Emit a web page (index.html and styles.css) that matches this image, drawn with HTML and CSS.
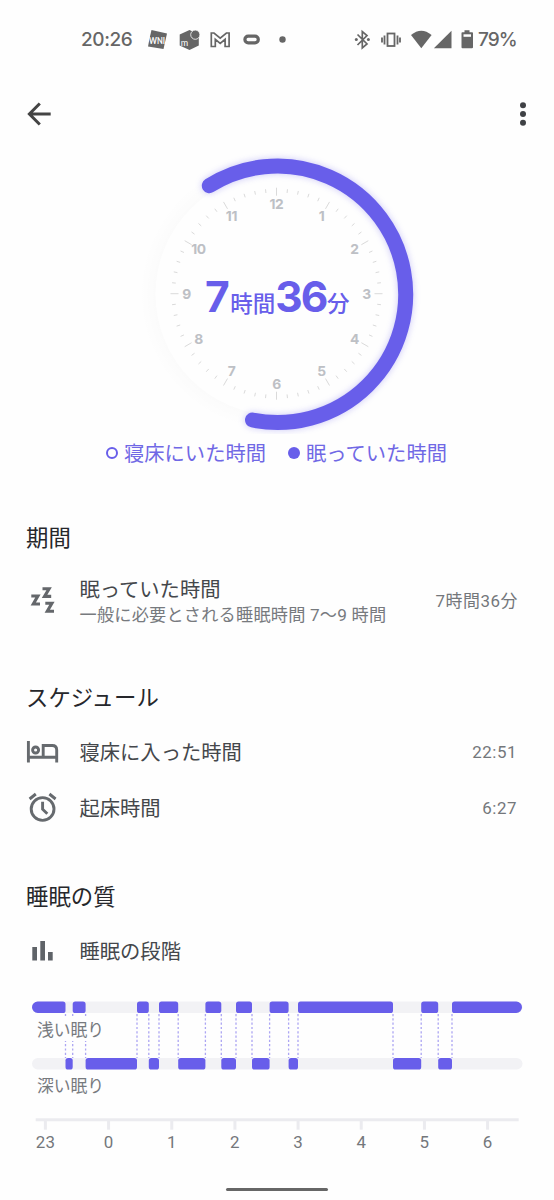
FILE: index.html
```html
<!DOCTYPE html>
<html lang="ja">
<head>
<meta charset="utf-8">
<title>睡眠</title>
<link rel="stylesheet" href="styles.css">
</head>
<body>
<div class="screen">
  <header class="status">
    <span class="status-time">20:26</span>
    <svg class="status-left" width="145" height="24" viewBox="145 27 145 24">
      <path class="glyph" d="M151.500 29l15.500 3.500-3.500 15.500-15.500-2.500 1.500-8z"/>
      <text class="tiny-mark" x="149" y="42.500" textLength="16" lengthAdjust="spacingAndGlyphs">WNI</text>
      <path class="glyph" d="M179.700 33.500l9.800-4.500 9.300 4.500v11l-9.300 4.500-9.800-4.500z"/>
      <circle class="glyph knob" cx="195.300" cy="33.700" r="4.600"/>
      <text class="tiny-mark thin" x="180.700" y="44.500">m</text>
      <path class="line" d="M211.300 45.500v-13.500h2.700l6.200 5.200 6.200-5.200h2.700v13.500h-4v-7.200l-4.900 4-4.900-4v7.200z"/>
      <rect class="line thick" x="244.900" y="35.200" width="13.400" height="6.600" rx="3.300"/>
      <circle class="glyph" cx="282.500" cy="38.500" r="3.200"/>
    </svg>
    <svg class="status-right" width="124" height="24" viewBox="352 27 124 24">
      <path class="line bt" d="M357.500 33.500l9.500 9.500-4.700 4v-16.500l4.700 4-9.500 9.500"/>
      <circle class="glyph" cx="356.300" cy="38.600" r="1.500"/><circle class="glyph" cx="368.400" cy="38.600" r="1.500"/>
      <rect class="line thick2" x="387.500" y="32.500" width="7" height="12.500"/>
      <path class="line thick2" d="M384.500 34.500v9M397.500 34.500v9M382 36.500v5M400 36.500v5"/>
      <path class="glyph" d="M411 34q10.300-8.500 20.600 0l-10.300 13.300z"/>
      <path class="glyph" d="M451.500 29.700v17.600h-17.600z"/>
      <path class="glyph" d="M464.500 29.300h5v2h2.700q.8 0 .8.800v14.200q0 1-1 1h-9.500q-1 0-1-1v-14.200q0-.8.800-.8h2.200z"/>
      <path class="gap" d="M463.500 33.300h7.500v2.500h-7.500z"/>
    </svg>
    <span class="status-battery">79%</span>
  </header>

  <nav class="appbar">
    <svg width="24" height="24" viewBox="0 0 24 24"><path class="arrow" d="M23.700 12H3M12.800 1.500L2.400 12l10.400 10.500"/></svg>
    <svg width="8" height="24" viewBox="0 0 8 24"><g class="dots"><circle cx="4" cy="3.200" r="3"/><circle cx="4" cy="12" r="3"/><circle cx="4" cy="20.800" r="3"/></g></svg>
  </nav>

  <svg class="dial" width="554" height="285" viewBox="0 149 554 285">
    <defs>
      <radialGradient id="halo" gradientUnits="userSpaceOnUse" cx="276.500" cy="294" r="137">
        <stop offset=".883" stop-color="#000" stop-opacity=".012"/>
        <stop offset="1" stop-color="#000" stop-opacity="0"/>
      </radialGradient>
      <filter id="glow" x="-20%" y="-20%" width="140%" height="140%"><feGaussianBlur stdDeviation="3.500"/></filter>
    </defs>
    <circle cx="276.500" cy="294" r="137" fill="url(#halo)"/>
    <circle class="face" cx="276.500" cy="294" r="121"/>
    <path class="arc arc-glow" filter="url(#glow)" d="M209.300 185.700A128.200 128.200 0 1 1 252.500 420"/>
    <path class="arc" d="M209.300 185.700A128.200 128.200 0 1 1 252.500 420"/>
    <g id="ticks"></g>
    <g id="hours" class="hours"></g>
    <text class="total" y="311.500"><tspan class="num" x="205">7</tspan><tspan class="unit" x="230.300">時間</tspan><tspan class="num" x="275.300">36</tspan><tspan class="unit" x="327">分</tspan></text>
  </svg>

  <div class="legend">
    <span class="legend-item"><i class="mark hollow"></i><span>寝床にいた時間</span></span>
    <span class="legend-item"><i class="mark"></i><span>眠っていた時間</span></span>
  </div>

  <section class="section duration">
    <h2>期間</h2>
    <div class="row tall">
      <svg class="icon" width="34" height="34" viewBox="26 583 34 34">
        <path class="zz" d="M31.300 596h6.600l-4.600 8h6.700M42.500 588.700h6.600l-4.600 7.700h6.700M45.300 603.300h6.600l-4.600 7.900h6.700"/>
      </svg>
      <div class="label"><div>眠っていた時間</div><div class="sub">一般に必要とされる睡眠時間 7〜9 時間</div></div>
      <span class="value">7時間36分</span>
    </div>
  </section>

  <section class="section schedule">
    <h2>スケジュール</h2>
    <div class="row">
      <svg class="icon" width="34" height="34" viewBox="26 735 34 34">
        <path class="stroke" d="M28.400 741v21.600M28.400 757.300h28.300M56.700 762.600v-12.600q0-4.500-4.500-4.500h-9v11.800"/>
        <circle class="stroke" cx="35.600" cy="750" r="3"/>
      </svg>
      <div class="label">寝床に入った時間</div>
      <span class="value">22:51</span>
    </div>
    <div class="row">
      <svg class="icon" width="34" height="34" viewBox="26 791 34 34">
        <circle class="stroke" cx="42.600" cy="809" r="11.400"/>
        <path class="stroke" d="M42.600 801.800v7.400l4.700 4.600M29.600 799l6.200-5M49.400 794l6.200 5"/>
      </svg>
      <div class="label">起床時間</div>
      <span class="value">6:27</span>
    </div>
  </section>

  <section class="section quality">
    <h2>睡眠の質</h2>
    <div class="row">
      <svg class="icon" width="34" height="34" viewBox="26 934 34 34">
        <path class="solid" d="M32.300 947h4.700v13.500h-4.700zM40.300 941h4.700v19.500h-4.700zM48 952h4.700v8.500h-4.700z"/>
      </svg>
      <div class="label">睡眠の段階</div>
    </div>
  </section>

  <svg class="stages" width="554" height="190" viewBox="0 979 554 190">
    <rect class="track" x="32" y="1001.500" width="490.500" height="11.500" rx="5.750"/>
    <rect class="track" x="32" y="1058" width="490.500" height="11.500" rx="5.750"/>
    <g id="stages"></g>
    <rect class="label-bg" x="34" y="1016" width="72" height="25"/>
    <text class="stage-label" x="37" y="1035.500">浅い眠り</text>
    <text class="stage-label" x="37" y="1092">深い眠り</text>
    <path class="axis" d="M35.700 1119.700H518.700"/>
    <g id="axis"></g>
  </svg>
  <div class="home"></div>
</div>
<script src="chart.js"></script>
</body>
</html>
```

FILE: styles.css
```css
* { box-sizing: border-box; }
body { margin: 0; background: #fefefe; font-family: Roboto, "Noto Sans CJK JP", sans-serif; color: #44474b; }
.screen { width: 554px; height: 1200px; display: flex; flex-direction: column; overflow: hidden; }

.status { height: 79px; display: flex; align-items: center; padding-left: 81px; font-family: Inter, sans-serif; font-size: 19px; font-weight: 500; color: #666; flex: none; }
.status-time { width: 64px; letter-spacing: -.4px; }
.status-battery { letter-spacing: -.9px; }
.status-left { margin-right: 62px; }
.status-right { margin-right: 2px; }
.glyph { fill: #666; }
.knob { stroke: #fefefe; stroke-width: .8; }
.line { fill: none; stroke: #666; stroke-width: 1.7; }
.line.thick { stroke-width: 3.2; }
.line.thick2 { stroke-width: 1.8; }
.gap { fill: #fefefe; }
.tiny-mark { fill: #fefefe; font: 700 10px Lato, sans-serif; }
.tiny-mark.thin { font-weight: 400; font-size: 9px; }

.appbar { height: 70px; display: flex; justify-content: space-between; align-items: center; padding: 0 27px 0 27px; flex: none; }
.arrow { fill: none; stroke: #444; stroke-width: 3; }
.dots { fill: #3f4145; }

.dial, .stages { display: block; flex: none; }
.face { fill: #fefefe; }
.arc { fill: none; stroke: #685eea; stroke-width: 15; stroke-linecap: round; }
.arc-glow { opacity: .34; }
.tick { stroke: #dadada; stroke-width: 1; }
.hours { fill: #bdc0c5; font: 700 13.8px Inter, sans-serif; letter-spacing: -.3px; text-anchor: middle; }
.total { fill: #685eea; }
.num { font: 700 42.5px Inter, sans-serif; letter-spacing: -2px; }
.unit { font: 500 22.5px "Noto Sans CJK JP", sans-serif; }

.legend { height: 38px; display: flex; align-items: center; padding-left: 106px; gap: 22px; font-size: 20.3px; color: #7068e5; flex: none; }
.legend-item { display: flex; align-items: center; gap: 6px; }
.legend-item span { padding-bottom: 2px; }
.mark { width: 12px; height: 12px; border-radius: 50%; background: #685eea; }
.mark.hollow { background: none; border: 2px solid #685eea; }

.section { padding: 0 37px 0 26px; flex: none; }
.duration { margin-top: 46px; }
.schedule { margin-top: 31px; }
.quality { margin-top: 40px; }
h2 { margin: 0; height: 40px; line-height: 41px; font-size: 22.4px; font-weight: 400; color: #26272b; }
.row { height: 56px; display: flex; align-items: center; font-size: 20.3px; }
.schedule h2, .quality h2 { line-height: 42px; margin-bottom: 7px; }
.row.tall { height: 88px; padding-bottom: 4px; }
.icon { flex: none; margin-right: 19.5px; }
.label { flex: 1; white-space: nowrap; line-height: 25px; padding-top: 2px; }
.tall .label { padding-top: 6px; }
.sub { font-size: 17.2px; letter-spacing: .2px; color: #777a7e; }
.value { font-size: 16.9px; letter-spacing: .55px; color: #74777b; }
.tall .value { margin-top: -2px; margin-right: -1px; }
.zz { fill: none; stroke: #64676b; stroke-width: 3.1; }
.stroke { fill: none; stroke: #666a6e; stroke-width: 2.9; }
.solid { fill: #5f6368; }

.track { fill: #f2f2f5; }
.segment { fill: #685eea; }
.link { stroke: #aca5f3; stroke-width: 1.3; stroke-dasharray: 2.2 2.1; }
.label-bg { fill: #fefefe; }
.stage-label { font-size: 16.8px; fill: #777a7e; }
.axis, .axis-tick { fill: none; stroke: #ebebef; stroke-width: 3; }
.axis-label { font-size: 16.9px; letter-spacing: .2px; fill: #74777b; text-anchor: middle; }

.home { width: 102px; height: 3px; margin: 19px 0 0 226px; border-radius: 2px; background: #666; flex: none; }
```

FILE: chart.js
```js
const NS = "http://www.w3.org/2000/svg";
function add(parent, tag, attrs, text) {
  const el = document.createElementNS(NS, tag);
  for (const k in attrs) el.setAttribute(k, attrs[k]);
  if (text !== undefined) el.textContent = text;
  parent.appendChild(el);
}
const byId = id => document.getElementById(id);

// Clock face
const cx = 276.5, cy = 293.7;
for (let i = 0; i < 60; i++) {
  const a = i * Math.PI / 30, s = Math.sin(a), c = -Math.cos(a);
  const inner = i % 5 ? 101.3 : 98, outer = i % 5 ? 105 : 106;
  add(byId("ticks"), "line", { class: "tick", x1: cx + s * inner, y1: cy + c * inner, x2: cx + s * outer, y2: cy + c * outer });
}
for (let h = 1; h <= 12; h++) {
  const a = h * Math.PI / 6;
  add(byId("hours"), "text", { x: cx + 90 * Math.sin(a), y: cy - 90 * Math.cos(a) + 4.8 }, h);
}

// Sleep stages, alternating light and deep
const edges = [32, 65.5, 72.7, 85.6, 137, 148.8, 159, 178.2, 205.4, 221.3, 236, 252, 269.6, 288.6, 298, 393, 421.2, 438.2, 452, 522];
const g = byId("stages");
for (let i = 1; i < edges.length - 1; i++)
  add(g, "line", { class: "link", x1: edges[i], y1: 1014, x2: edges[i], y2: 1058 });
for (let i = 0; i < edges.length - 1; i++) {
  const x = edges[i], r = edges[i + 1], y = i % 2 ? 1058 : 1001.5, b = y + 11.5;
  const rl = i === 0 ? 5.7 : 2.6, rr = i === edges.length - 2 ? 5.7 : 2.6;
  add(g, "path", { class: "segment", d: `M${x + rl} ${y}H${r - rr}A${rr} ${rr} 0 0 1 ${r} ${y + rr}V${b - rr}A${rr} ${rr} 0 0 1 ${r - rr} ${b}H${x + rl}A${rl} ${rl} 0 0 1 ${x} ${b - rl}V${y + rl}A${rl} ${rl} 0 0 1 ${x + rl} ${y}` });
}
[23, 0, 1, 2, 3, 4, 5, 6].forEach((h, i) => {
  const x = 45.4 + i * 63.17;
  add(byId("axis"), "line", { class: "axis-tick", x1: x, y1: 1120, x2: x, y2: 1129.7 });
  add(byId("axis"), "text", { class: "axis-label", x, y: 1148.3 }, h);
});
```
